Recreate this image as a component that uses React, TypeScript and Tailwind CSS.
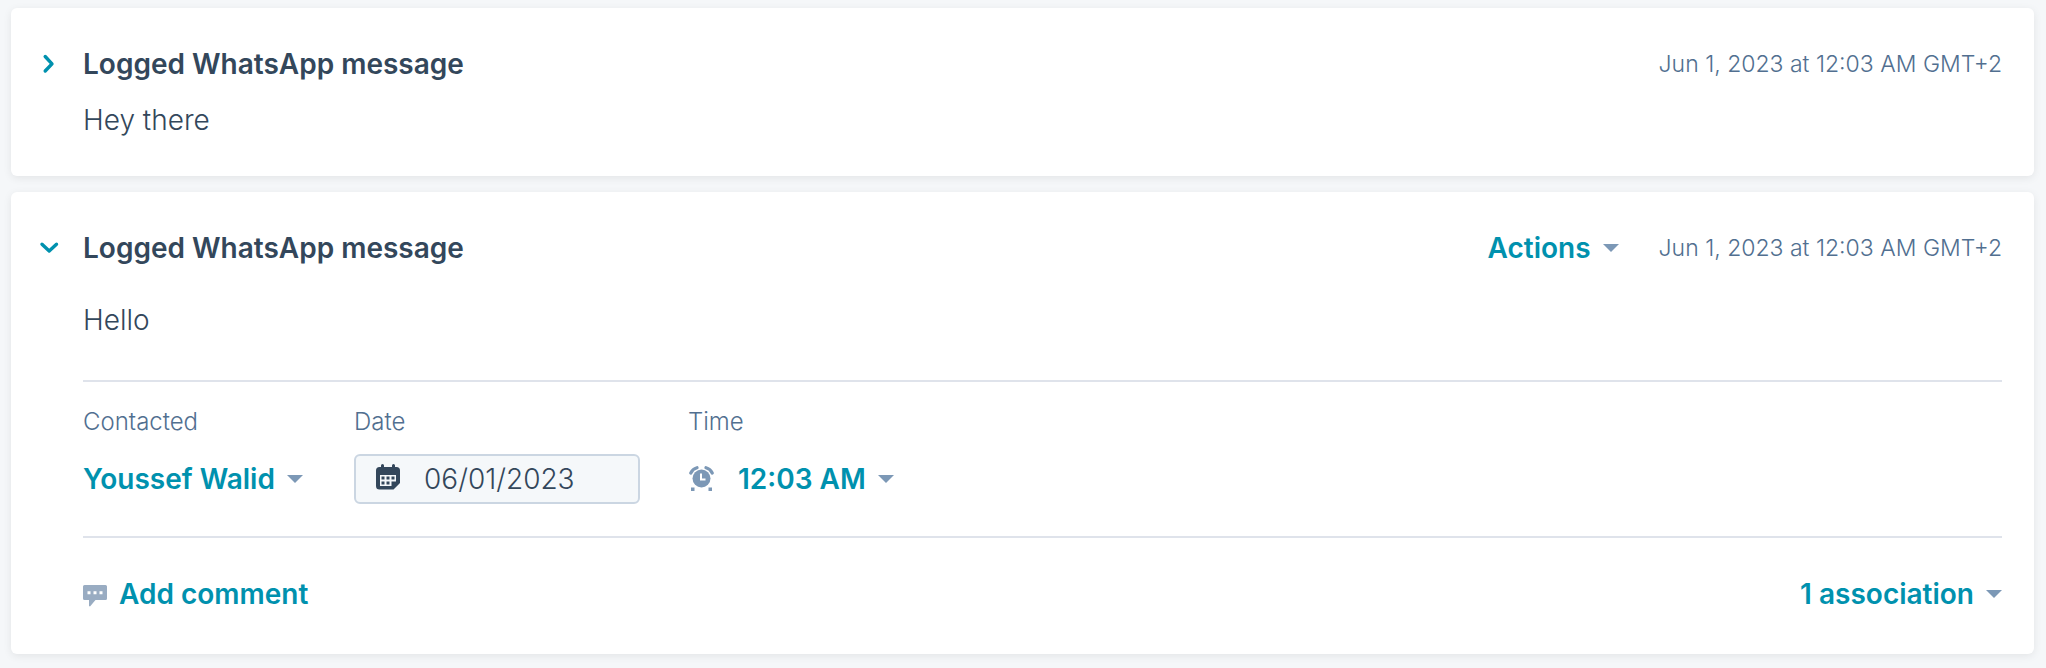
import { useState } from 'react';
import type { ReactNode } from 'react';
import { clsx } from 'clsx';

const TIMESTAMP = 'Jun 1, 2023 at 12:03 AM GMT+2';

function Caret() {
  return (
    <svg viewBox="0 0 16 8" className="h-2 w-4 shrink-0 fill-[#7c98b6]" aria-hidden="true">
      <path d="M0 0h16L8 8z" />
    </svg>
  );
}

function Chevron({ open }: { open: boolean }) {
  return (
    <svg
      viewBox="0 0 20 20"
      className={clsx('size-5 fill-none stroke-[#0091ae]', open && 'rotate-90')}
      strokeWidth="3.4"
      strokeLinecap="round"
      strokeLinejoin="round"
      aria-hidden="true"
    >
      <path d="M6.200 2.500 13 9.800l-6.800 7.200" />
    </svg>
  );
}

function CalendarIcon() {
  return (
    <svg viewBox="0 0 24 30" className="h-[30px] w-6 shrink-0" aria-hidden="true">
      <path
        fill="#33475b"
        d="M5 1.500a1.500 1.500 0 0 1 3 0V3h8V1.500a1.500 1.500 0 0 1 3 0V3h1.500A3.500 3.500 0 0 1 24 6.500V19l-6.500 6.500h-14A3.500 3.500 0 0 1 0 22V6.500A3.500 3.500 0 0 1 3.500 3H5z"
      />
      <path fill="#f5f8fa" d="M4 11h16v6.500h-4.500V22H4z" />
      <path
        fill="#33475b"
        d="M5.500 12.500h3v3h-3zM10.500 12.500h3v3h-3zM15.500 12.500h3v3h-3zM5.500 17.500h3v3h-3zM10.500 17.500h3v3h-3z"
      />
    </svg>
  );
}

function AlarmIcon() {
  return (
    <svg viewBox="0 0 26 27" className="h-[27px] w-[26px] shrink-0" aria-hidden="true">
      <circle cx="13.500" cy="12.500" r="9" fill="#7c98b6" />
      <path d="M13 7.500v6h4.500" fill="none" stroke="#fff" strokeWidth="2" />
      <path
        d="M2.800 7C4 4.200 6 2.500 9 1.700M24.200 7C23 4.200 21 2.500 18 1.700"
        fill="none"
        stroke="#7c98b6"
        strokeWidth="3.200"
        strokeLinecap="round"
      />
      <path d="M3 21.500h3.500V25H3zM20.500 21.500h3.500V25H20.500z" fill="#7c98b6" />
    </svg>
  );
}

function CommentIcon() {
  return (
    <svg viewBox="0 -4 24 26" className="h-[26px] w-6 shrink-0" aria-hidden="true">
      <path
        fill="#99acc2"
        d="M1.500 0h21A1.500 1.500 0 0 1 24 1.500v12a1.500 1.500 0 0 1-1.500 1.500H12.500L7 21.500 6 21V15H1.500A1.500 1.500 0 0 1 0 13.500v-12A1.500 1.500 0 0 1 1.500 0z"
      />
      <path fill="#fff" d="M4.500 6.200h3v3h-3zM10.500 6.200h3v3h-3zM16.500 6.200h3v3h-3z" />
    </svg>
  );
}

function LinkButton({ id, children }: { id?: string; children: ReactNode }) {
  return (
    <button
      id={id}
      type="button"
      className="flex cursor-pointer items-center gap-3 text-[28px] leading-10 font-semibold whitespace-nowrap text-[#0091ae]"
    >
      {children}
    </button>
  );
}

type LogCardProps = {
  message: string;
  defaultOpen?: boolean;
  children?: ReactNode;
};

function LogCard({ message, defaultOpen = false, children }: LogCardProps) {
  const [open, setOpen] = useState(defaultOpen);

  return (
    <article className="rounded-md bg-white py-9 pr-8 pl-[72px] shadow-[0_2px_8px_rgba(0,0,0,0.08)]">
      <header className="-ml-11 flex items-center">
        <button
          type="button"
          aria-expanded={open}
          aria-label="Toggle details"
          onClick={() => setOpen(!open)}
          className="mr-6 cursor-pointer"
        >
          <Chevron open={open} />
        </button>
        <h2 className="flex-1 text-[28px] leading-10 font-semibold">Logged WhatsApp message</h2>
        <div className="flex items-center gap-10">
          {open && (
            <LinkButton>
              Actions
              <Caret />
            </LinkButton>
          )}
          <time className="text-[23px] leading-10 font-light text-[#516f90]">{TIMESTAMP}</time>
        </div>
      </header>
      <p className={clsx('text-[28px] leading-10 font-light', open ? 'mt-8' : 'mt-4')}>{message}</p>
      {open && children}
    </article>
  );
}

const labelClass = 'text-2xl font-light text-[#516f90]';

export default function App() {
  return (
    <main className="flex min-h-screen flex-col gap-4 bg-[#f5f7f9] pt-2 pr-3 pb-3 pl-[11px] font-['Inter',sans-serif] text-[#33475b]">
      <LogCard message="Hey there" />

      <LogCard message="Hello" defaultOpen>
        <div className="mt-10 flex gap-12 border-y-2 border-[#dfe3eb] pt-6 pb-8">
          <div className="flex min-w-[223px] flex-col gap-4">
            <label htmlFor="contacted" className={labelClass}>
              Contacted
            </label>
            <div className="flex h-[50px] items-center">
              <LinkButton id="contacted">
                Youssef Walid
                <Caret />
              </LinkButton>
            </div>
          </div>

          <div className="flex w-[286px] flex-col gap-4">
            <label htmlFor="date" className={labelClass}>
              Date
            </label>
            <div className="flex h-[50px] items-center gap-6 rounded-md border-2 border-[#cbd6e2] bg-[#f5f8fa] px-5">
              <CalendarIcon />
              <input
                id="date"
                type="text"
                defaultValue="06/01/2023"
                className="w-full min-w-0 bg-transparent text-[28px] leading-10 font-light outline-none"
              />
            </div>
          </div>

          <div className="flex flex-col gap-4">
            <label htmlFor="time" className={labelClass}>
              Time
            </label>
            <div className="flex h-[50px] items-center gap-6">
              <AlarmIcon />
              <LinkButton id="time">
                12:03 AM
                <Caret />
              </LinkButton>
            </div>
          </div>
        </div>

        <footer className="flex items-center justify-between pt-9 pb-1">
          <LinkButton>
            <CommentIcon />
            Add comment
          </LinkButton>
          <LinkButton>
            1 association
            <Caret />
          </LinkButton>
        </footer>
      </LogCard>
    </main>
  );
}
